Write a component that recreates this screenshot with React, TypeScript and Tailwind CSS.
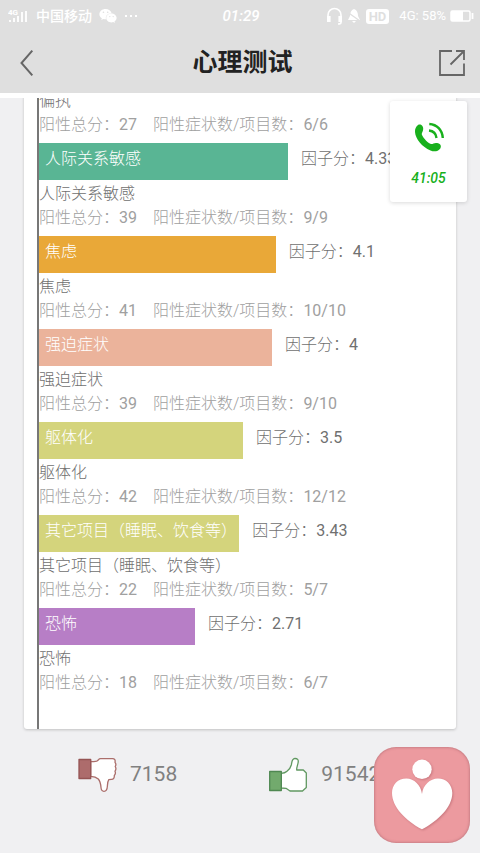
import React from 'react';
import { FaWeixin } from 'react-icons/fa';

interface Factor {
  name: string;
  score: string;
  total: number;
  items: string;
  width: number;
  color: string;
}

const factors: Factor[] = [
  { name: '人际关系敏感', score: '4.33', total: 39, items: '9/9', width: 59.7, color: 'bg-[#59b594]' },
  { name: '焦虑', score: '4.1', total: 41, items: '10/10', width: 56.8, color: 'bg-[#e9a838]' },
  { name: '强迫症状', score: '4', total: 39, items: '9/10', width: 55.9, color: 'bg-[#ebb39b]' },
  { name: '躯体化', score: '3.5', total: 42, items: '12/12', width: 48.9, color: 'bg-[#d4d47c]' },
  { name: '其它项目（睡眠、饮食等）', score: '3.43', total: 22, items: '5/7', width: 48, color: 'bg-[#d4d47c]' },
  { name: '恐怖', score: '2.71', total: 18, items: '6/7', width: 37.4, color: 'bg-[#b77ec6]' },
];

function StatusBar() {
  return (
    <div className="grid h-8 grid-cols-[1fr_auto_1fr] items-center pl-2 pr-[6px] font-medium text-white">
      <div className="flex items-center">
        <svg className="mr-2 h-4 w-5" viewBox="0 0 20 16" aria-hidden="true">
          <text x="0" y="7" fontSize="8" fontWeight="bold" fill="currentColor">4G</text>
          <path d="M2 12v2M6 10v4M10 8v6M14 4v10M18 3v11" stroke="currentColor" strokeWidth="1.8" />
        </svg>
        <span className="text-sm">中国移动</span>
        <FaWeixin className="ml-[7px] h-[18px] w-[18px]" />
        <span className="ml-2 flex gap-[3px]">
          <i className="h-0.5 w-0.5 bg-white" />
          <i className="h-0.5 w-0.5 bg-white" />
          <i className="h-0.5 w-0.5 bg-white" />
        </span>
      </div>
      <span className="text-[15px] italic">01:29</span>
      <div className="flex items-center justify-end">
        <svg className="h-[18px] w-[17px]" viewBox="0 0 17 18" fill="none" stroke="currentColor" aria-hidden="true">
          <path d="M2 10V8a6.500 6.500 0 0 1 13 0v7.500q0 1.500-3 1.500" strokeWidth="1.600" />
          <path d="M2.800 9v6M14.200 9v6" strokeWidth="3.600" />
        </svg>
        <svg className="ml-[5px] h-4 w-3" viewBox="0 0 12 16" aria-hidden="true">
          <path d="M6 1c3 1 4 4 4 7l2 4H0l2-4c0-3 1-6 4-7ZM4 13h4l-2 2Z" fill="currentColor" />
          <path d="M0 4.500 12 13" stroke="#dfdfdf" strokeWidth="1.300" />
        </svg>
        <span className="ml-[6px] rounded-[3px] bg-white px-[3px] text-[13px] font-bold leading-[15px] text-[#dfdfdf]">HD</span>
        <span className="ml-[10px] text-[13px] font-normal">4G: 58%</span>
        <svg className="ml-1 h-3 w-6" viewBox="0 0 24 12" aria-hidden="true">
          <rect x="1" y="1" width="19" height="10" rx="1.500" fill="none" stroke="currentColor" strokeWidth="1.500" />
          <path d="M1 1h12v10H1z" fill="currentColor" />
          <path d="M22.500 3v6" stroke="currentColor" strokeWidth="1.800" />
        </svg>
      </div>
    </div>
  );
}

function NavBar() {
  return (
    <div className="flex h-[61px] items-center justify-between pl-5 pr-[15px] text-[#666]">
      <button type="button" aria-label="返回" className="w-[26px]">
        <svg className="h-7 w-[14px]" viewBox="0 0 14 28" fill="none" stroke="currentColor" strokeWidth="2">
          <path d="M12.300 1.700 1.500 14l10.800 12.300" />
        </svg>
      </button>
      <h1 className="text-[25px] font-bold leading-8 text-[#222]">心理测试</h1>
      <button type="button" aria-label="分享">
        <svg className="h-[26px] w-[26px]" viewBox="0 0 26 26" fill="none" stroke="currentColor" strokeWidth="1.800">
          <path d="M13 1H1v24h24V13.500" />
          <path d="M17 1h8v9M25 1 11.500 14.500" />
        </svg>
      </button>
    </div>
  );
}

function FactorDetail({ name, total, items }: { name: string; total: number; items: string }) {
  return (
    <div className="pb-1.5 pt-0.5 leading-6">
      <p className="text-[#707070]">{name}</p>
      <p className="flex gap-4 text-[#a0a0a0]">
        <span>阳性总分：<span className="font-normal">{total}</span></span>
        <span>阳性症状数/项目数：<span className="font-normal">{items}</span></span>
      </p>
    </div>
  );
}

function FactorRow({ factor }: { factor: Factor }) {
  return (
    <li>
      <div className="flex h-[37px] gap-[13px] whitespace-nowrap leading-8">
        <div className={`shrink-0 pl-1.5 text-white ${factor.color}`} style={{ width: `${factor.width}%` }}>
          {factor.name}
        </div>
        <span className="text-[#707070]">
          因子分：<span className="font-normal">{factor.score}</span>
        </span>
      </div>
      <FactorDetail name={factor.name} total={factor.total} items={factor.items} />
    </li>
  );
}

function DislikeIcon() {
  return (
    <svg className="h-9 w-10" viewBox="0 0 40 36" stroke="#ab6e6b" strokeWidth="1.300" strokeLinejoin="round" aria-hidden="true">
      <path
        fill="#fff"
        d="M12.700 4.300C15 4.600 17 4.700 18.700 4.200C20.300 3.500 20.600 1.700 22.500 1.700H34.500C36.700 1.700 37.500 3 37 5.300C38 6.500 38 8.300 37.200 9.500C38.100 11 38 13 37 14.200C37.700 15.800 37.300 17.500 36.300 18.500C36.500 21 35.500 22.300 33.500 22.300L30.800 22.700C29.600 24.500 29.600 26.500 29.400 29C29.200 32.500 28.500 34.300 26 34.300C23.800 34.300 23.200 33 23 30.500C22.700 27 22 24 20.300 22C18.500 20.300 16 19.400 12.700 19.300Z"
      />
      <rect x="1" y="2.500" width="11.700" height="19" fill="#ad6c6c" stroke="#955454" />
    </svg>
  );
}

function LikeIcon() {
  return (
    <svg className="h-9 w-10" viewBox="0 0 40 36" stroke="#609861" strokeWidth="1.300" strokeLinejoin="round" aria-hidden="true">
      <path
        fill="#fff"
        d="M12.300 16.300C14.500 16.300 16.500 15.700 18 14.300C20.500 12.500 21.500 11 22.300 8C23 5 22.700 1.700 25.800 1.500C28.500 1.400 29.500 2.800 29.200 5C28.900 8 27.500 10 27.700 13H34.300L37.300 16V30.500L33.500 34H21L17 31.300L12.300 31Z"
      />
      <rect x="0.700" y="14.500" width="11.600" height="19" fill="#72aa6d" stroke="#4f8852" />
    </svg>
  );
}

function CallWindow() {
  return (
    <button
      type="button"
      className="absolute right-[13px] top-[101px] flex h-[101px] w-[77px] flex-col items-center rounded-[3px] bg-white pt-[21px] text-[#18b01c] shadow-[0_1px_4px_rgba(0,0,0,0.15)]"
    >
      <svg className="h-[30px] w-[30px]" viewBox="0 0 30 30" aria-hidden="true">
        <path
          fill="currentColor"
          d="M4 3C6.500 1.500 9.500 4 9.200 7C9 10 7.200 11 8 13C9.500 16.500 14 21 17 22C19 22.300 20 20.500 23 21C26.500 21.500 27.800 24 26.300 26.500C24 29.700 20 30 16.500 28.500C8 25 1.500 17 1 10C0.800 7 2 4.500 4 3Z"
        />
        <path d="M15.300 2C23 2.500 28.300 8 28.800 16M15 8.500C19.500 9 22 11.500 22.500 16" fill="none" stroke="currentColor" strokeWidth="2.400" />
      </svg>
      <span className="mt-4 text-sm font-medium italic leading-5">41:05</span>
    </button>
  );
}

function FloatingApp() {
  return (
    <button
      type="button"
      aria-label="心理"
      className="absolute bottom-[10px] right-[10px] h-24 w-24 overflow-hidden rounded-[22px] bg-[#ec9a9f] shadow-[inset_0_0_3px_rgba(130,70,80,0.6)]"
    >
      <svg className="h-24 w-24 drop-shadow-[1px_1px_1px_rgba(150,70,80,0.4)]" viewBox="0 0 96 96" fill="#fff">
        <circle cx="48" cy="22.300" r="9.700" />
        <path d="M48 47C47 38 40 31.500 32.500 31.500C24 31.500 18 37.500 18 46C18 60 32 74 48 82.300C64 74 78.300 60 78.300 46C78.300 37.500 72 31.500 64 31.500C56 31.500 49 38 48 47Z" />
      </svg>
    </button>
  );
}

export default function App() {
  return (
    <div className="relative flex min-h-screen flex-col overflow-hidden bg-[#f0f0f2] font-['Roboto','Noto_Sans_CJK_SC',sans-serif] text-base font-light">
      <header className="border-b-[5px] border-white bg-[#dfdfdf]">
        <StatusBar />
        <NavBar />
      </header>

      <main className="overflow-hidden">
        <section className="mx-6 rounded-b-[3px] bg-white pl-[13px] shadow-[0_1px_3px_rgba(0,0,0,0.2)]">
          <div className="border-l-2 border-[#777] pb-7">
            {/* list is scrolled, so the row above starts part way */}
            <div className="-mt-[11px]">
              <FactorDetail name="偏执" total={27} items="6/6" />
            </div>
            <ul>
              {factors.map((factor) => (
                <FactorRow key={factor.name} factor={factor} />
              ))}
            </ul>
          </div>
        </section>

        <div className="flex gap-[92px] whitespace-nowrap pb-8 pl-[78px] pt-7 text-[21px] font-normal text-[#808080]">
          <button type="button" aria-label="踩 7158" className="flex items-center gap-3">
            <DislikeIcon />
            <span>7158</span>
          </button>
          <button type="button" aria-label="赞 91542" className="flex items-center gap-3">
            <LikeIcon />
            <span>91542</span>
          </button>
        </div>
      </main>

      <CallWindow />
      <FloatingApp />
    </div>
  );
}
